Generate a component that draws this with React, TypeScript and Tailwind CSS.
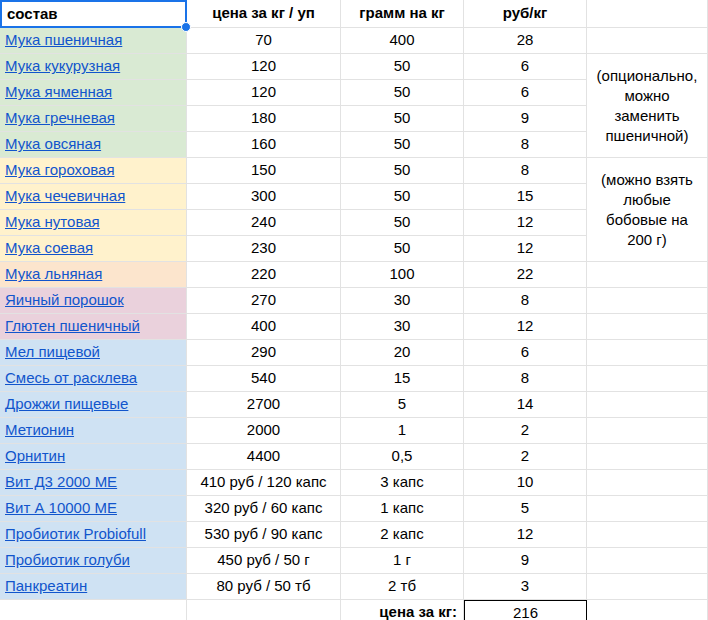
import React from "react";

const G = "bg-[#d9ead3]";
const Y = "bg-[#fff2cc]";
const O = "bg-[#fce5cd]";
const P = "bg-[#ead1dc]";
const B = "bg-[#cfe2f3]";

const rows: [string, string, string, string, string, string][] = [
  ["Мука пшеничная", "70", "400", "28", G, ""],
  ["Мука кукурузная", "120", "50", "6", G, ""],
  ["Мука ячменная", "120", "50", "6", G, ""],
  ["Мука гречневая", "180", "50", "9", G, ""],
  ["Мука овсяная", "160", "50", "8", G, ""],
  ["Мука гороховая", "150", "50", "8", Y, ""],
  ["Мука чечевичная", "300", "50", "15", Y, ""],
  ["Мука нутовая", "240", "50", "12", Y, ""],
  ["Мука соевая", "230", "50", "12", Y, ""],
  ["Мука льняная", "220", "100", "22", O, ""],
  ["Яичный порошок", "270", "30", "8", P, ""],
  ["Глютен пшеничный", "400", "30", "12", P, ""],
  ["Мел пищевой", "290", "20", "6", B, ""],
  ["Смесь от расклева", "540", "15", "8", B, ""],
  ["Дрожжи пищевые", "2700", "5", "14", B, ""],
  ["Метионин", "2000", "1", "2", B, ""],
  ["Орнитин", "4400", "0,5", "2", B, ""],
  ["Вит Д3 2000 МЕ", "410 руб / 120 капс", "3 капс", "10", B, ""],
  ["Вит А 10000 МЕ", "320 руб / 60 капс", "1 капс", "5", B, ""],
  ["Пробиотик Probiofull", "530 руб / 90 капс", "2 капс", "12", B, ""],
  ["Пробиотик голуби", "450 руб / 50 г", "1 г", "9", B, ""],
  ["Панкреатин", "80 руб / 50 тб", "2 тб", "3", B, ""],
];

const cell = "border-r border-b border-[#e2e2e2] flex items-center";

export default function App() {
  return (
    <div className="w-[708px] h-[620px] overflow-hidden bg-white text-[15px] text-black" style={{ fontFamily: "'Liberation Sans', Arial, sans-serif" }}>
      <div className="grid grid-cols-[187px_154px_123px_123px_121px] grid-rows-[28px_repeat(23,26px)]">
        {/* header */}
        <div className="relative border-2 border-[#1a73e8] flex items-center px-[5px] font-bold">
          состав
          <span className="absolute -right-[6px] -bottom-[6px] w-[10px] h-[10px] rounded-full bg-[#1a73e8] border border-white z-10" />
        </div>
        <div className={`${cell} justify-center font-bold`}>цена за кг / уп</div>
        <div className={`${cell} justify-center font-bold`}>грамм на кг</div>
        <div className={`${cell} justify-center font-bold`}>руб/кг</div>
        <div className={cell} />

        {rows.map((r, i) => (
          <React.Fragment key={i}>
            <div className={`${cell} ${r[4]} px-[5px] text-[#1155cc] underline`}>{r[0]}</div>
            <div className={`${cell} justify-center`}>{r[1]}</div>
            <div className={`${cell} justify-center`}>{r[2]}</div>
            <div className={`${cell} justify-center`}>{r[3]}</div>
            {i === 0 && <div className={cell} />}
            {i === 1 && (
              <div className={`${cell} row-span-4 justify-center text-center leading-[20px]`}>
                (опционально,<br />можно<br />заменить<br />пшеничной)
              </div>
            )}
            {i === 5 && (
              <div className={`${cell} row-span-4 justify-center text-center leading-[20px]`}>
                (можно взять<br />любые<br />бобовые на<br />200 г)
              </div>
            )}
            {i >= 9 && <div className={cell} />}
          </React.Fragment>
        ))}

        <div className={cell} />
        <div className={cell} />
        <div className={`${cell} justify-end pr-[6px] font-bold`}>цена за кг:</div>
        <div className="border border-black flex items-center justify-center">216</div>
        <div className={cell} />
      </div>
    </div>
  );
}
